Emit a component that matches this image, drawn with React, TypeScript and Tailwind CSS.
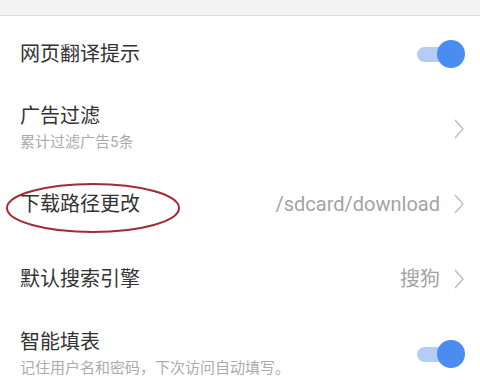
import React from "react";

const font = { fontFamily: 'Roboto, "Noto Sans CJK SC", sans-serif' };

function Toggle() {
  return (
    <div className="relative w-[48px] h-[30px] flex items-center">
      <div className="absolute left-0 top-[8px] w-[36px] h-[15px] rounded-full bg-[#b5cdf5]" />
      <div className="absolute right-0 top-[1px] w-[28px] h-[28px] rounded-full bg-[#4a8cf0]" />
    </div>
  );
}

function Chevron() {
  return (
    <svg width="12" height="22" viewBox="0 0 12 22" className="shrink-0">
      <path d="M2 2 L10 11 L2 20" fill="none" stroke="#bdbdbd" strokeWidth="1.4" />
    </svg>
  );
}

export default function App() {
  return (
    <div className="w-[480px] h-[390px] bg-white overflow-hidden text-[#333]" style={font}>
      <div className="h-[16px] bg-[#f3f3f3] border-b border-[#dcdcdc]" />
      <div className="h-[75px] flex items-center justify-between pl-5 pr-[15px]">
        <span className="text-[20px] leading-[24px]">网页翻译提示</span>
        <Toggle />
      </div>
      <div className="h-[75px] flex items-center justify-between pl-5 pr-[15px]">
        <div className="flex flex-col">
          <span className="text-[20px] leading-[24px] -mt-[1px]">广告过滤</span>
          <span className="text-[15px] leading-[20px] mt-[4px] text-[#ababab]">累计过滤广告5条</span>
        </div>
        <Chevron />
      </div>
      <div className="relative h-[75px] flex items-center justify-between pl-5 pr-[15px]">
        <span className="text-[20px] leading-[24px]">下载路径更改</span>
        <div className="flex items-center gap-[13px]">
          <span className="text-[20px] leading-[24px] text-[#a3a3a3]">/sdcard/download</span>
          <Chevron />
        </div>
        <svg className="absolute left-[5px] top-[16px]" width="176" height="52" viewBox="0 0 176 52">
          <ellipse cx="88" cy="26" rx="86" ry="24" fill="none" stroke="#a42a33" strokeWidth="2" />
        </svg>
      </div>
      <div className="h-[75px] flex items-center justify-between pl-5 pr-[15px]">
        <span className="text-[20px] leading-[24px]">默认搜索引擎</span>
        <div className="flex items-center gap-[13px]">
          <span className="text-[20px] leading-[24px] text-[#a3a3a3]">搜狗</span>
          <Chevron />
        </div>
      </div>
      <div className="h-[75px] flex items-center justify-between pl-5 pr-[15px]">
        <div className="flex flex-col">
          <span className="text-[20px] leading-[24px]">智能填表</span>
          <span className="text-[15px] leading-[20px] mt-[4px] text-[#ababab]">记住用户名和密码，下次访问自动填写。</span>
        </div>
        <Toggle />
      </div>
    </div>
  );
}
